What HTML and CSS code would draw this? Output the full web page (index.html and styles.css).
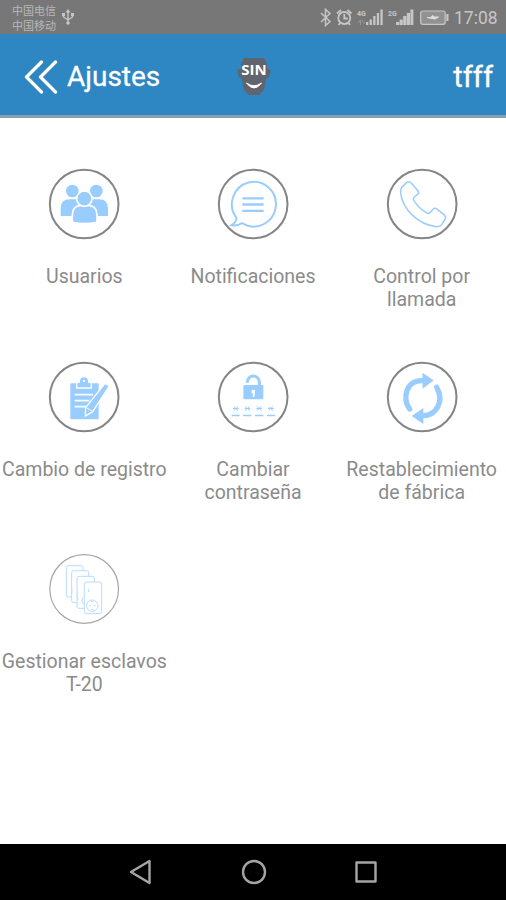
FILE: index.html
```html
<!DOCTYPE html>
<html lang="es">
<head>
<meta charset="utf-8">
<title>Ajustes</title>
<link rel="stylesheet" href="styles.css">
</head>
<body>
<div class="screen">
  <div class="status">
    <div class="carriers"><span>中国电信</span><span>中国移动</span></div>
    <svg class="usb" viewBox="0 0 12 16"><path d="M6 2v12M1.500 5v3l4.500 3 4.500-3V5" fill="none" stroke="currentColor" stroke-width="1.400"/><path d="M6 0l2.500 3.500h-5zM0 4h3v3H0zM9 4h3v3H9z" fill="currentColor"/><circle cx="6" cy="14" r="1.800" fill="currentColor"/></svg>
    <svg class="indicators" viewBox="318 0 134 34">
      <path d="M321 13l9 8.500-4.500 4V9.500l4.500 4-9 8.500" fill="none" stroke="currentColor" stroke-width="1.500"/>
      <g fill="none" stroke="currentColor" stroke-width="1.800"><circle cx="344.300" cy="18" r="6"/><path d="M344.300 14v4.500h3.500M337 13.500l4-3.500M351.500 13.500l-4-3.500M340 23l-1.500 2M348.500 23l1.500 2"/></g>
      <text x="357" y="15.500">4G</text>
      <text x="388" y="15.500">2G</text>
      <path class="faint" d="M358 23l2.500-3v5M362 20l2.500 4" />
      <path d="M366 22h2.300v3H366zM369.600 19.500h2.300V25h-2.300zM373.200 16h2.300v9h-2.300zM376.800 13h2.300v12h-2.300zM380.400 9.500h2.300V25h-2.300z" fill="currentColor"/>
      <path d="M396 22h3.200v3H396zM399.600 19.500h3.200V25h-3.200zM403.200 16h3.200v9h-3.200zM406.800 13h3.200v12h-3.200zM410.400 9.500h3V25h-3z" fill="currentColor"/>
      <rect x="420.700" y="11" width="24.500" height="13.300" rx="2" fill="#929292" stroke="currentColor" stroke-width="1.200"/>
      <path d="M446.300 14h2.200v7h-2.200z" fill="currentColor"/>
      <path d="M427 17.500h4l1.500-2 2 1.500h4l-3.500 2-3-.5z" fill="#dedede" stroke="#dedede"/>
    </svg>
    <span class="clock">17:08</span>
  </div>
  <header class="bar">
    <svg class="back" viewBox="0 0 34 34"><path d="M17.500 2L2.500 17l15 15M31.500 2l-15 15 15 15" fill="none" stroke="#fff" stroke-width="3.200" stroke-linecap="round" stroke-linejoin="round"/></svg>
    <h1>Ajustes</h1>
    <svg class="logo" viewBox="0 0 36 40"><path d="M8 1h20l3 6v5l4 1-2 7-3 2-2 11-5 5H13l-5-5-2-11-3-2-2-7 4-1V7z" fill="#60646c"/><path d="M10.500 26q7.500 10 15 0-7.500 5.500-15 0z" fill="#fff" stroke="#fff"/><text x="18" y="18" text-anchor="middle">SIN</text></svg>
    <span class="device">tfff</span>
  </header>
  <main class="grid">
    <div class="item">
      <svg class="icon" viewBox="26 24 216 216"><circle class="ring" cx="134.500" cy="132" r="103"/>
        <g class="solid"><circle cx="99" cy="93" r="19"/><circle cx="171" cy="93" r="19"/><path d="M64 168v-23q0-27 27-27h17q16 0 20 20v30zM206 168v-23q0-27-27-27h-17q-16 0-20 20v30z"/>
        <g stroke="#fff" stroke-width="5"><path d="M99 187v-22q0-29 28-29h18q28 0 28 29v22q-37 8-74 0z"/><circle cx="135" cy="116" r="23"/></g></g></svg>
      <span>Usuarios</span>
    </div>
    <div class="item">
      <svg class="icon" viewBox="26 24 216 216"><circle class="ring" cx="134.500" cy="132" r="103"/>
        <g class="line"><path d="M101 189a66 67 0 1 0-17-16q3 10-15 23 19 3 32-7z" stroke-width="6"/><path d="M102 115h64M102 133.500h64M102 152.500h64" stroke-width="7"/></g></svg>
      <span>Notificaciones</span>
    </div>
    <div class="item">
      <svg class="icon" viewBox="26 24 216 216"><circle class="ring" cx="134.500" cy="132" r="103"/>
        <path class="line" stroke-width="4.500" d="M73 82l15-14q7-6 14 2l20 22q5 6-1 11l-10 8q-5 4-2 10 17 26 40 38 6 3 10-2l8-9q6-6 13 0l20 16q8 7 3 14l-10 16q-5 7-17 6c-55-7-99-52-106-100q-1-11 3-18z"/></svg>
      <span>Control por<br>llamada</span>
    </div>
    <div class="item">
      <svg class="icon" viewBox="26 24 216 216"><circle class="ring" cx="134.500" cy="132" r="103"/>
        <g class="solid"><path d="M96 91h79q3 0 3 3v102q0 3-3 3H96q-3 0-3-3V94q0-3 3-3z"/><path d="M112 88h8v-3a14 14 0 0 1 28 0v3h8v17h-44z" stroke="#fff" stroke-width="4"/><circle cx="134" cy="84" r="3.500" fill="#fff"/></g>
        <path d="M106 125h55M106 143h44M106 161h34" fill="none" stroke="#fff" stroke-width="5"/>
        <path class="solid" d="M197 91l13 8-50 77-22 13 1-25z" stroke="#fff" stroke-width="4"/><path d="M143 165l14 9" stroke="#fff" stroke-width="3"/></svg>
      <span>Cambio de registro</span>
    </div>
    <div class="item">
      <svg class="icon" viewBox="26 24 216 216"><circle class="ring" cx="134.500" cy="132" r="103"/>
        <rect class="solid" x="105" y="96" width="60" height="43" rx="4"/><path class="line" d="M117 89v-2a18 18 0 0 1 36 0v12" stroke-width="9"/>
        <path d="M130 111h10v9l-2 12h-5v-12h-3z" fill="#fff"/>
        <path class="line" stroke-width="3" d="M76 160l13 13M76 173l13-13M74 166.500h17M111 160l13 13M111 173l13-13M109 166.500h17M146 160l13 13M146 173l13-13M144 166.500h17M181 160l13 13M181 173l13-13M179 166.500h17"/>
        <path class="line" stroke-width="5" d="M70 187.500h24M104 187.500h25M140 187.500h25M176 187.500h24"/></svg>
      <span>Cambiar<br>contraseña</span>
    </div>
    <div class="item">
      <svg class="icon" viewBox="26 24 216 216"><circle class="ring" cx="134.500" cy="132" r="103"/>
        <path class="line" stroke-width="16" stroke-linecap="round" d="M97 168C75 137 84 82 136 83M178 103C202 144 178 187 137 188"/>
        <path class="solid" d="M135 59l34 23-33 25zM138 165v48l-35-24z"/></svg>
      <span>Restablecimiento<br>de fábrica</span>
    </div>
    <div class="item">
      <svg class="icon" viewBox="26 24 216 216"><circle class="ring thin" cx="134.500" cy="132" r="103"/>
        <g class="pale"><rect x="81" y="62" width="50" height="94" rx="6"/><rect x="97" y="77" width="51" height="96" rx="6"/><rect x="113" y="94" width="52" height="96" rx="6"/><rect x="135" y="111" width="52" height="95" rx="6"/><circle cx="159" cy="182" r="17"/><path d="M149 182h5M164 182h5M155 169q4 3 8 0M155 195q4-3 8 0M148 132v9M98 128q-4 8 1 14M116 143q-7 8 1 20M130 157q-6 10 2 20"/></g></svg>
      <span>Gestionar esclavos<br>T-20</span>
    </div>
  </main>
  <nav class="nav">
    <svg viewBox="0 0 28 28"><path d="M22.500 3v22L4 14z"/></svg>
    <svg viewBox="0 0 28 28"><circle cx="14" cy="14" r="11"/></svg>
    <svg viewBox="0 0 28 28"><path d="M4.500 4.500h19v19h-19z"/></svg>
  </nav>
</div>
</body>
</html>
```
FILE: styles.css
```css
* { box-sizing: border-box; }
body { margin: 0; font-family: Roboto, "Noto Sans CJK SC", sans-serif; }
svg { display: block; flex: none; }
.screen { width: 506px; height: 900px; display: flex; flex-direction: column; background: #fff; overflow: hidden; }
.status { height: 34px; flex: none; background: #777; color: #c6c6c6; display: flex; align-items: center; padding: 0 10px 0 12px; }
.carriers { display: flex; flex-direction: column; font: 11px/15px "Noto Sans CJK SC", sans-serif; color: #b8b8b8; padding-top: 2px; }
.usb { width: 12px; height: 16px; margin-left: 6px; }
.indicators { width: 134px; height: 34px; margin-left: auto; }
.indicators text { font: bold 7px Roboto, sans-serif; fill: currentColor; }
.faint { fill: none; stroke: #999; }
.clock { font-size: 17.500px; width: 42px; margin-left: 2px; white-space: nowrap; padding-top: 1px; }
.bar { height: 84px; flex: none; background: #2e86c3; border-bottom: 3px solid #8aa0ae; color: #fff; display: flex; align-items: center; padding: 4px 13px 0 24px; }
.back { width: 34px; height: 34px; }
h1 { margin: 0 0 0 9px; font-size: 28px; font-weight: 400; line-height: 34px; width: 169px; -webkit-text-stroke: .3px #fff; }
.logo { width: 36px; height: 40px; }
.logo text { font: bold 15px "Open Sans", sans-serif; fill: #fff; }
.device { margin-left: auto; font-size: 29px; line-height: 34px; -webkit-text-stroke: .3px #fff; }
.grid { flex: 1; display: grid; grid-template-columns: repeat(3, minmax(0, 1fr)); grid-auto-rows: 192.500px; align-content: start; padding-top: 50px; }
.item { display: flex; flex-direction: column; align-items: center; gap: 25px; text-align: center; font-size: 19.500px; line-height: 23px; color: #8b8b8b; white-space: nowrap; }
.icon { width: 72px; height: 72px; }
.ring { fill: none; stroke: #858585; stroke-width: 6; }
.ring.thin { stroke: #a5a5a5; stroke-width: 3.500; }
.solid { fill: #99ccff; }
.line { fill: none; stroke: #99ccff; }
.pale { fill: #fff; stroke: #b9dbff; stroke-width: 3; }
.nav { height: 56px; flex: none; background: #000; display: flex; justify-content: center; align-items: center; gap: 84.500px; padding-left: 1px; }
.nav svg { width: 28px; height: 28px; fill: none; stroke: #a5a5a5; stroke-width: 2.400; stroke-linejoin: round; }
```
